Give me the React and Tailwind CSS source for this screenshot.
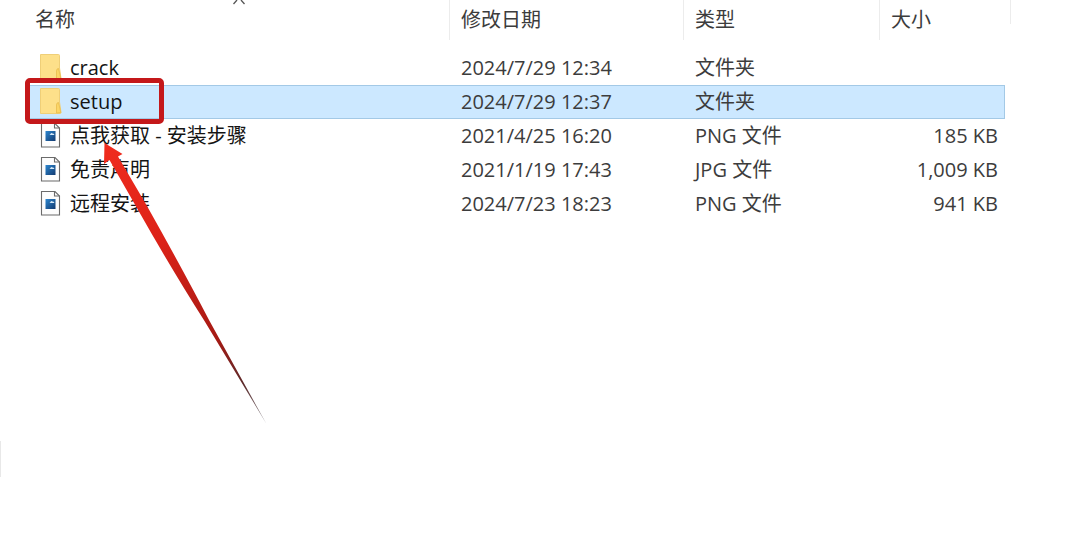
import React from "react";

const files = [
  { name: "crack", date: "2024/7/29 12:34", type: "文件夹", size: "", kind: "folder" },
  { name: "setup", date: "2024/7/29 12:37", type: "文件夹", size: "", kind: "folder", selected: true },
  { name: "点我获取 - 安装步骤", date: "2021/4/25 16:20", type: "PNG 文件", size: "185 KB", kind: "image" },
  { name: "免责声明", date: "2021/1/19 17:43", type: "JPG 文件", size: "1,009 KB", kind: "image" },
  { name: "远程安装", date: "2024/7/23 18:23", type: "PNG 文件", size: "941 KB", kind: "image" },
];

function FolderIcon() {
  return (
    <svg width="22" height="28" viewBox="0 0 22 28" className="shrink-0" aria-hidden="true">
      <path d="M0.5 0.5H18.5Q19.5 0.5 19.5 1.5V14L21 24.5Q21 25.5 20 25.5H0.5Z" fill="#fde08a" stroke="#efcf78" />
      <path d="M16.5 25V17Q16.5 14.5 18.5 14.5L20.8 24.5Z" fill="#fbd668" stroke="#e8bb4c" strokeWidth="0.8" />
    </svg>
  );
}

function ImageIcon() {
  return (
    <svg width="22" height="28" viewBox="0 0 22 28" className="shrink-0" aria-hidden="true">
      <defs>
        <linearGradient id="photo" x1="0" y1="0" x2="1" y2="1">
          <stop offset="0" stopColor="#2c86cf" />
          <stop offset="1" stopColor="#123a70" />
        </linearGradient>
      </defs>
      <path d="M1.5 1.5H15L19.5 6V25H1.5Z" fill="#fdfdfd" stroke="#6b6b6b" strokeWidth="1.1" />
      <path d="M14.5 1.5V6H19.5" fill="none" stroke="#6b6b6b" strokeWidth="1.1" />
      <rect x="5.5" y="9" width="10" height="10" fill="url(#photo)" />
      <path d="M10.5 12Q11 10.5 12.5 11.5Q14 11 14.5 13H9.5Z" fill="#d5e9f8" />
    </svg>
  );
}

export default function App() {
  return (
    <main className="relative min-h-screen overflow-hidden bg-white pr-[69px] pl-[30px] font-['Open_Sans','Noto_Sans_CJK_SC',sans-serif] text-[20px] leading-[34px] text-[#3c3c3c]">
      <table className="w-full table-fixed border-separate border-spacing-0">
        <colgroup>
          <col />
          <col className="w-[234px]" />
          <col className="w-[196px]" />
          <col className="w-[125px]" />
          <col className="w-[6px]" />
        </colgroup>
        <thead>
          <tr className="h-10 text-left">
            <th className="border-r border-[#ececec] p-0 pl-[5px] font-normal">名称</th>
            <th className="border-r border-[#ececec] p-0 pl-[11px] font-normal">修改日期</th>
            <th className="border-r border-[#ececec] p-0 pl-[11px] font-normal">类型</th>
            <th className="p-0 pl-[11px] font-normal">大小</th>
            <td className="p-0 align-top">
              <div className="h-6 border-r border-[#ececec]" />
            </td>
          </tr>
        </thead>
        <tbody>
          <tr className="h-[11px]">
            <td colSpan={5} className="p-0" />
          </tr>
          {files.map((file) => {
            const cell = file.selected ? "border-y border-[#a3c9e6] bg-[#cce8ff]" : "border-y border-transparent";
            return (
              <tr key={file.name} className="h-[34px] leading-8" aria-selected={!!file.selected}>
                <td className={cell + " p-0 pl-[10px] text-[#141414]"}>
                  <span className="flex items-center gap-2">
                    {file.kind === "folder" ? <FolderIcon /> : <ImageIcon />}
                    {file.name}
                  </span>
                </td>
                <td className={cell + " p-0 pl-[11px]"}>{file.date}</td>
                <td className={cell + " p-0 pl-[11px]"}>{file.type}</td>
                <td className={cell + " border-r p-0 pr-[6px] text-right"}>{file.size}</td>
                <td className="p-0" />
              </tr>
            );
          })}
        </tbody>
      </table>

      <svg className="absolute top-0 left-[232px]" width="14" height="5" viewBox="0 0 14 5" aria-hidden="true">
        <path d="M1.5 4L5 0M12.5 4L9 0" fill="none" stroke="#555" strokeWidth="1.3" />
      </svg>
      <div className="absolute top-[441px] left-0 h-9 w-px bg-[#e8e8e8]" />
      <div className="absolute top-[78px] left-[25px] h-[46px] w-[139px] rounded-[5px] border-[5px] border-[#c4181a]" />
      <svg className="absolute top-[140px] left-[100px]" width="170" height="290" viewBox="100 140 170 290" aria-hidden="true">
        <defs>
          <linearGradient id="shaft" gradientUnits="userSpaceOnUse" x1="105" y1="143" x2="266" y2="423">
            <stop offset="0" stopColor="#f02c1e" />
            <stop offset="0.35" stopColor="#dc2218" />
            <stop offset="0.7" stopColor="#a51a14" />
            <stop offset="0.86" stopColor="#5c2a2a" />
            <stop offset="1" stopColor="#8a8a90" />
          </linearGradient>
        </defs>
        <path d="M104.500 143L122.500 154L118 156.500L147 206Q183 270 209 320L266.500 424L204.500 321Q172 270 137.500 209L109.500 160L104 164Z" fill="url(#shaft)" />
      </svg>
    </main>
  );
}
